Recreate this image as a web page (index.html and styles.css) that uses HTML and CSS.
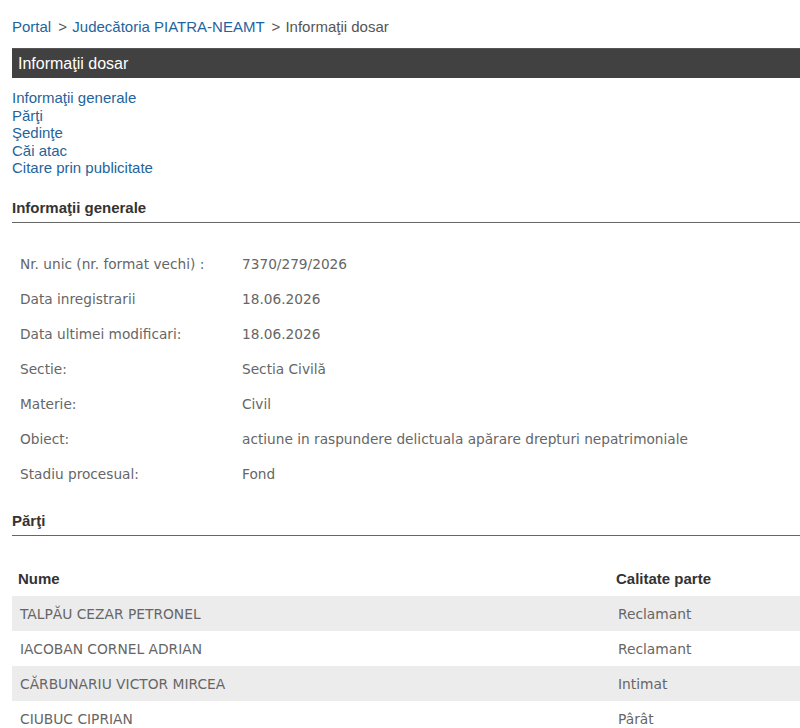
FILE: index.html
```html
<!DOCTYPE html>
<html lang="ro">
<head>
<meta charset="utf-8">
<title>Informaţii dosar</title>
<link rel="stylesheet" href="styles.css">
</head>
<body>
<div class="breadcrumb">
  <a href="#">Portal</a>
  <span class="sep">&gt;</span>
  <a href="#">Judecătoria PIATRA-NEAMT</a>
  <span class="sep">&gt;</span>
  <span class="current">Informaţii dosar</span>
</div>
<div class="titlebar">Informaţii dosar</div>
<ul class="nav">
  <li><a href="#">Informaţii generale</a></li>
  <li><a href="#">Părţi</a></li>
  <li><a href="#">Şedinţe</a></li>
  <li><a href="#">Căi atac</a></li>
  <li><a href="#">Citare prin publicitate</a></li>
</ul>
<h2 class="section">Informaţii generale</h2>
<table class="info">
  <tr><td class="label">Nr. unic (nr. format vechi) :</td><td>7370/279/2026</td></tr>
  <tr><td class="label">Data inregistrarii</td><td>18.06.2026</td></tr>
  <tr><td class="label">Data ultimei modificari:</td><td>18.06.2026</td></tr>
  <tr><td class="label">Sectie:</td><td>Sectia Civilă</td></tr>
  <tr><td class="label">Materie:</td><td>Civil</td></tr>
  <tr><td class="label">Obiect:</td><td>actiune in raspundere delictuala apărare drepturi nepatrimoniale</td></tr>
  <tr><td class="label">Stadiu procesual:</td><td>Fond</td></tr>
</table>
<h2 class="section parti">Părţi</h2>
<table class="parties">
  <colgroup>
    <col class="col-name">
    <col class="col-role">
  </colgroup>
  <thead>
    <tr><th>Nume</th><th>Calitate parte</th></tr>
  </thead>
  <tbody>
    <tr><td>TALPĂU CEZAR PETRONEL</td><td>Reclamant</td></tr>
    <tr><td>IACOBAN CORNEL ADRIAN</td><td>Reclamant</td></tr>
    <tr><td>CĂRBUNARIU VICTOR MIRCEA</td><td>Intimat</td></tr>
    <tr><td>CIUBUC CIPRIAN</td><td>Pârât</td></tr>
  </tbody>
</table>
</body>
</html>
```
FILE: styles.css
```css
html, body {
  background: #fff;
}
body {
  margin: 0 0 0 12px;
  font-family: "Liberation Sans", Arial, sans-serif;
  font-size: 15px;
  color: #333;
  overflow: hidden;
}
a {
  color: #1f649c;
  text-decoration: none;
}
.breadcrumb {
  margin-top: 17px;
  line-height: 20px;
  font-size: 15px;
  color: #555;
}
.breadcrumb .sep {
  margin: 0 1px 0 3px;
  color: #555;
}
.breadcrumb .current {
  color: #555;
}
.titlebar {
  margin-top: 11px;
  height: 30px;
  line-height: 29px;
  background: #414141;
  border-top: 1px solid #555;
  box-sizing: border-box;
  color: #fff;
  font-size: 16px;
  padding-left: 6px;
}
.nav {
  list-style: none;
  margin: 11px 0 0;
  padding: 0;
  line-height: 17.5px;
  font-size: 15px;
}
.section {
  margin: 21.5px 0 0;
  font-size: 15px;
  font-weight: bold;
  line-height: 20px;
  color: #333;
  padding-bottom: 4px;
  border-bottom: 1px solid #666;
}
.info {
  margin-top: 23.5px;
  border-collapse: collapse;
  font-family: "DejaVu Sans", Tahoma, sans-serif;
  font-size: 13.7px;
  color: #666;
}
.info td {
  height: 35px;
  padding: 0 0 0 8px;
  vertical-align: middle;
}
.info td.label {
  width: 214px;
}
.section.parti {
  margin-top: 19.5px;
}
.parties {
  margin-top: 25px;
  width: 900px;
  table-layout: fixed;
  border-collapse: collapse;
  font-family: "DejaVu Sans", Tahoma, sans-serif;
  font-size: 13.8px;
  color: #666;
}
.col-name {
  width: 598px;
}
.col-role {
  width: 302px;
}
.parties th {
  font-family: "Liberation Sans", Arial, sans-serif;
  font-size: 15px;
  font-weight: bold;
  color: #333;
  text-align: left;
  height: 35px;
  padding: 0 0 0 6px;
}
.parties td {
  height: 35px;
  padding: 0 0 0 8px;
}
.parties tbody tr:nth-child(odd) {
  background: #ececec;
}
```
